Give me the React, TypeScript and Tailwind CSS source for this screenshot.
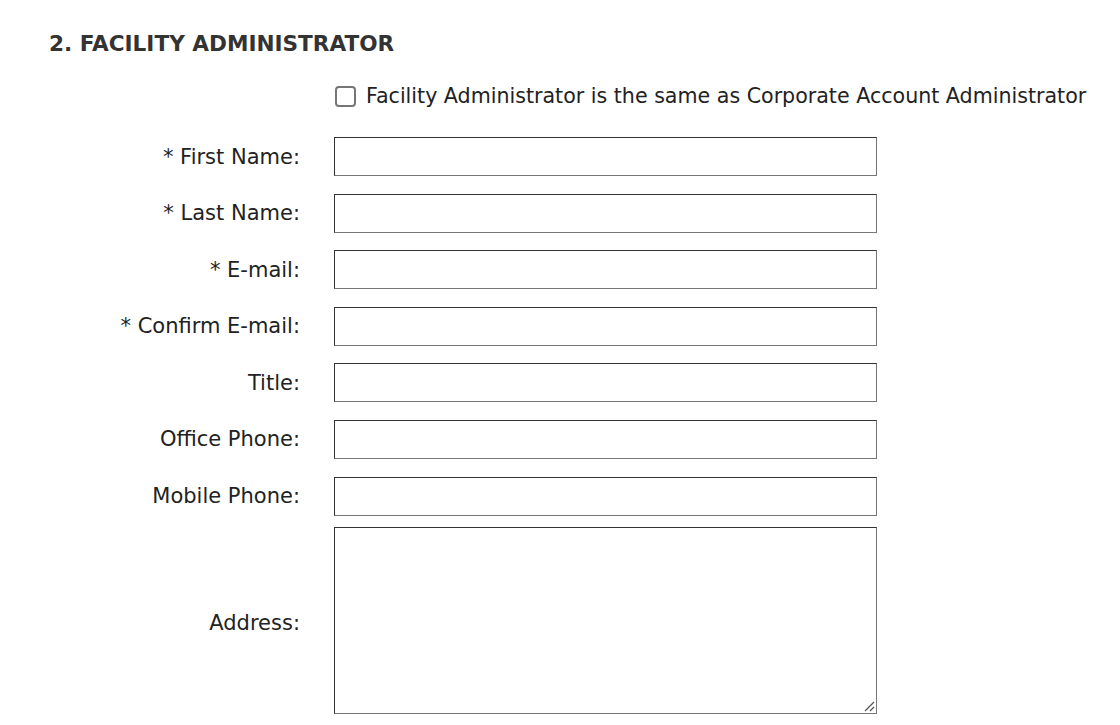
import { useState } from 'react'

const fields = [
  { label: 'First Name:', required: true },
  { label: 'Last Name:', required: true },
  { label: 'E-mail:', required: true },
  { label: 'Confirm E-mail:', required: true },
  { label: 'Title:', required: false },
  { label: 'Office Phone:', required: false },
  { label: 'Mobile Phone:', required: false },
]

const inputCls =
  'w-[543px] h-[39px] bg-white border border-t-[#333] border-l-[#333] border-b-[#767676] border-r-[#767676] outline-none px-2 text-[18px]'

export default function App() {
  const [same, setSame] = useState(false)

  return (
    <div
      className="w-[1120px] h-[725px] bg-white text-[#222] overflow-hidden"
      style={{ fontFamily: 'Verdana, "DejaVu Sans", sans-serif' }}
    >
      <h2 className="pl-[49px] pt-[31px] text-[21.6px] font-bold leading-[26px] text-[#333]">
        2. FACILITY ADMINISTRATOR
      </h2>

      <label className="flex items-center ml-[335px] mt-[26px] cursor-pointer">
        <span
          onClick={() => setSame(!same)}
          className="w-[21px] h-[21px] rounded-[4px] border-2 border-[#767676] bg-white flex items-center justify-center"
        >
          {same && <span className="text-[14px] leading-none">✓</span>}
        </span>
        <span className="ml-[10px] text-[20.6px] leading-[26px]">
          Facility Administrator is the same as Corporate Account Administrator
        </span>
      </label>

      <div className="mt-[28px] flex flex-col gap-y-[17.6px]">
        {fields.map((f) => (
          <div key={f.label} className="flex items-center">
            <div className="w-[300px] text-right text-[21px] leading-[26px]">
              {f.required && <span>* </span>}
              {f.label}
            </div>
            <input className={`ml-[34px] ${inputCls}`} />
          </div>
        ))}
      </div>

      <div className="flex items-center mt-[11px]">
        <div className="w-[300px] pt-[5px] text-right text-[21px] leading-[26px]">Address:</div>
        <div className="relative ml-[34px]">
          <textarea className="block w-[543px] h-[187px] resize-none bg-white border border-t-[#333] border-l-[#333] border-b-[#767676] border-r-[#767676] outline-none" />
          <svg
            className="absolute right-[2px] bottom-[2px]"
            width="12"
            height="12"
            viewBox="0 0 12 12"
          >
            <line x1="2" y1="11" x2="11" y2="2" stroke="#555" strokeWidth="1.2" />
            <line x1="7" y1="11" x2="11" y2="7" stroke="#555" strokeWidth="1.2" />
          </svg>
        </div>
      </div>
    </div>
  )
}
